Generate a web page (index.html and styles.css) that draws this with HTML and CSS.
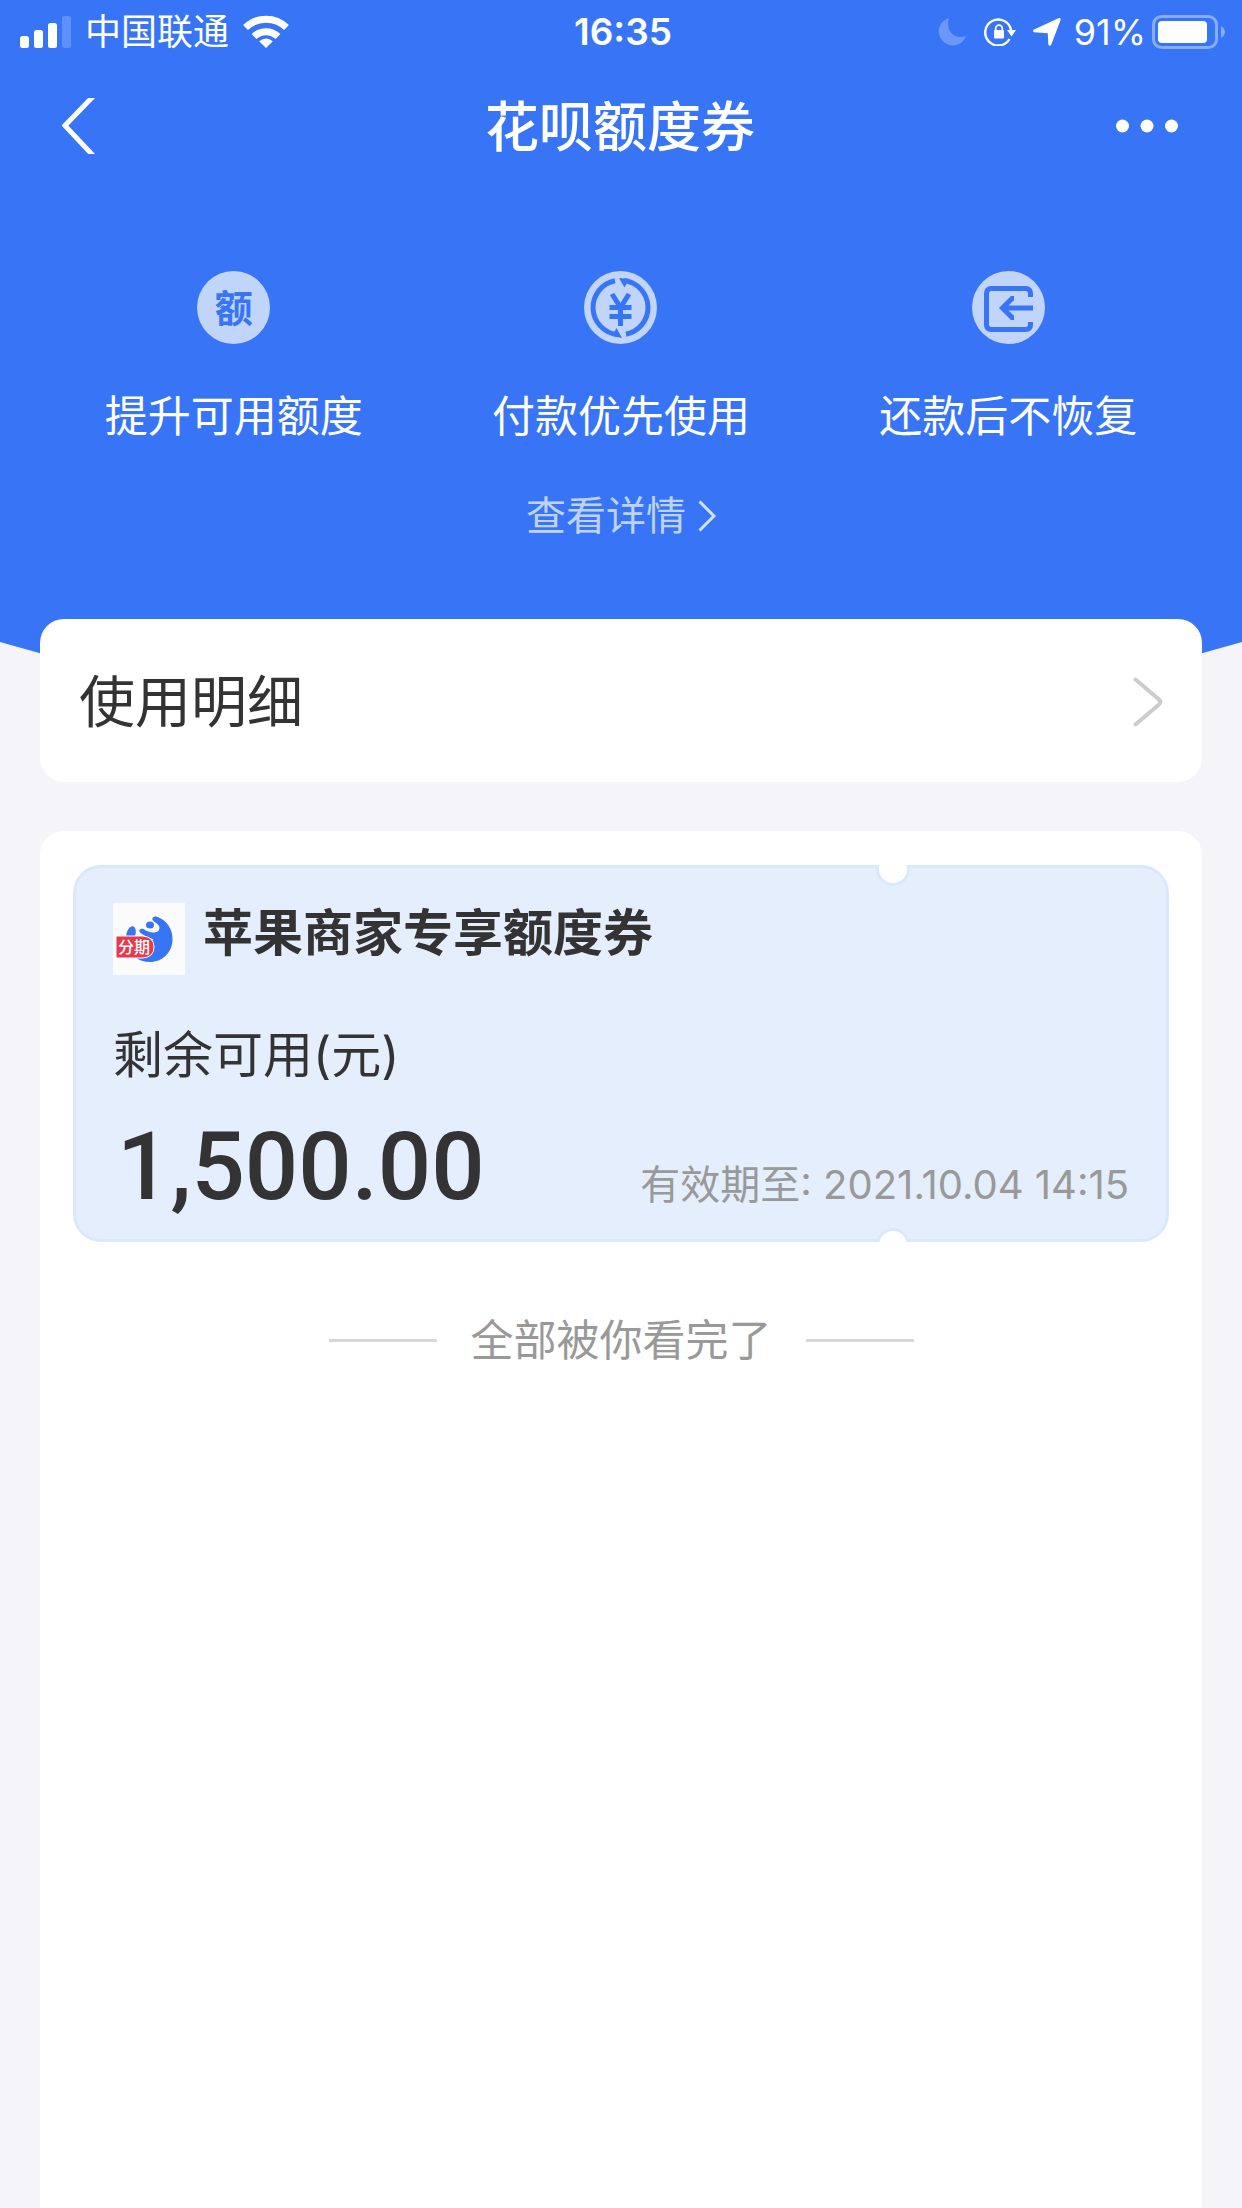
FILE: index.html
```html
<!DOCTYPE html>
<html lang="zh-CN">
<head>
<meta charset="utf-8">
<meta name="viewport" content="width=device-width, initial-scale=1">
<title>花呗额度券</title>
<link rel="stylesheet" href="styles.css">
</head>
<body>
<header class="hero">
  <div class="status">
    <div class="status-side">
      <svg class="signal" width="51" height="32" viewBox="0 0 51 32" fill="#fff" aria-hidden="true">
        <rect x="0" y="20" width="9" height="12" rx="2.5"/><rect x="14" y="14" width="9" height="18" rx="2.5"/><rect x="28" y="7" width="9" height="25" rx="2.5"/><rect x="42" y="0" width="9" height="32" rx="2.5" opacity=".2"/>
      </svg>
      <span class="carrier">中国联通</span>
      <svg class="wifi" width="46" height="34" viewBox="0 0 46 34" aria-hidden="true">
        <g fill="none" stroke="#fff" stroke-width="7"><path d="M2.500 12.500a29.500 29.500 0 0 1 41 0"/><path d="M11 21.500a17.500 17.500 0 0 1 24 0"/></g>
        <path fill="#fff" d="M16.200 26.200q6.800-5.400 13.600 0L23 33z"/>
      </svg>
    </div>
    <span class="time">16:35</span>
    <div class="status-side status-right">
      <svg class="moon" width="28" height="28" viewBox="0 0 28 28" aria-hidden="true"><path fill="#fff" opacity=".26" d="M11 0A14 14 0 1 0 28 18C17 22 7 14 11 0z"/></svg>
      <svg class="lock" width="32" height="28" viewBox="0 0 32 28" aria-hidden="true">
        <path d="M25.500 21A13 13 0 1 1 27 12" fill="none" stroke="#fff" stroke-width="2.400"/>
        <path d="M23 12h9l-4.500 6.500z" fill="#fff"/><rect x="10" y="12" width="10" height="8.500" rx="1" fill="#fff"/><path d="M11.700 12V10.500a3.300 3.300 0 0 1 6.600 0V12" fill="none" stroke="#fff" stroke-width="1.700"/>
      </svg>
      <svg class="locate" width="28" height="28" viewBox="0 0 28 28" aria-hidden="true"><path fill="#fff" d="M25.500.3q2.600-.8 2 1.900L18.300 26.500q-1.400 2.500-3 0l-.5-11.300L1 14.200q-2-1 0-2.700z"/></svg>
      <span class="percent">91%</span>
      <svg class="battery" width="74" height="34" viewBox="0 0 74 34" aria-hidden="true">
        <rect x="1.500" y="1.500" width="63" height="31" rx="8" fill="none" stroke="#fff" stroke-opacity=".4" stroke-width="3"/><rect x="6" y="6" width="49" height="22" rx="4" fill="#fff"/><path d="M69 11q8 6 0 12z" fill="#fff" opacity=".4"/>
      </svg>
    </div>
  </div>
  <nav class="nav">
    <button class="icon-button back" type="button" aria-label="返回">
      <svg width="34" height="56" viewBox="0 0 34 56"><path d="M31.500-2L3 27.600 31.500 58" fill="none" stroke="#fff" stroke-width="5"/></svg>
    </button>
    <h1 class="title">花呗额度券</h1>
    <button class="icon-button more" type="button" aria-label="更多">
      <svg width="62" height="14" viewBox="0 0 62 14" fill="#fff"><circle cx="6.500" cy="7" r="6.500"/><circle cx="31" cy="7" r="6.500"/><circle cx="55.500" cy="7" r="6.500"/></svg>
    </button>
  </nav>
  <ul class="features">
    <li class="feature"><span class="badge">额</span><span>提升可用额度</span></li>
    <li class="feature">
      <svg width="73" height="73" viewBox="0 0 73 73" aria-hidden="true">
        <circle cx="36.500" cy="36.500" r="36.500" fill="#c1d5fb"/>
        <g fill="none" stroke="#3875f6" stroke-width="5"><path d="M31 9.800A27.200 27.200 0 0 0 33 63.500"/><path d="M42 63.200A27.200 27.200 0 0 0 40 9.500"/></g>
        <path fill="#3875f6" d="M35 7l10 1-4.500 8.500zM38 67l-10-2 4.500-8z"/>
        <path d="M28 23l8.500 13.500L45 23M36.500 35v20M25.500 36.500h22M25.500 45.500h22" fill="none" stroke="#3875f6" stroke-width="5"/>
      </svg>
      <span>付款优先使用</span>
    </li>
    <li class="feature">
      <svg width="73" height="73" viewBox="0 0 73 73" aria-hidden="true">
        <circle cx="36.500" cy="36.500" r="36.500" fill="#c1d5fb"/>
        <path d="M58.500 26v-3.500q0-5-5-5h-34q-5 0-5 5v31q0 5 5 5h34q5 0 5-5V51M61 37H30M42 27.500h-2L30.500 37l9.500 9.500h2" fill="none" stroke="#3875f6" stroke-width="5"/>
      </svg>
      <span>还款后不恢复</span>
    </li>
  </ul>
  <a class="details" href="#details">查看详情
    <svg width="18" height="32" viewBox="0 0 18 32" aria-hidden="true"><path d="M1.500 1.500L16 16 1.500 30.500" fill="none" stroke="#d4e1fc" stroke-width="3"/></svg>
  </a>
</header>
<main class="content">
  <a class="usage" href="#usage">使用明细
    <svg width="30" height="50" viewBox="0 0 30 50" aria-hidden="true"><path d="M2.500 2.500L26 22.500q2.500 2.500 0 5L2.500 47.500" fill="none" stroke="#ccc" stroke-width="4" stroke-linecap="round"/></svg>
  </a>
  <section class="panel">
    <article class="coupon">
      <div class="coupon-head">
        <svg class="logo" width="72" height="72" viewBox="0 0 72 72" aria-hidden="true">
          <rect width="72" height="72" fill="#fbfbfc"/>
          <g fill="#3875f6">
            <path d="M43 13.500C54 17 60 26 59.500 37 59 50 49 59 37 59 31 59 26 57.500 22 54L34 50 40 36C36 35.500 31 32.500 27 29.500 25 27 28 25 30.500 26 36 30 43 31 46 27 48 23 44 20.500 40.500 18 38 16 40 13 43 13.500z"/>
            <ellipse cx="37" cy="22" rx="4" ry="3.500"/><ellipse cx="18" cy="31" rx="4.500" ry="8" transform="rotate(15 18 31)"/>
          </g>
          <path fill="#e8394a" stroke="#fff" d="M4 33h26q11 1 11 11T30 55H4q-1 0-1-1V34q0-1 1-1z"/>
          <text x="5" y="50" class="logo-text">分期</text>
        </svg>
        <h2 class="coupon-title">苹果商家专享额度券</h2>
      </div>
      <p class="label">剩余可用(元)</p>
      <div class="coupon-foot">
        <strong class="amount">1,500.00</strong>
        <span class="expiry">有效期至: 2021.10.04 14:15</span>
      </div>
    </article>
    <p class="end">全部被你看完了</p>
  </section>
</main>
</body>
</html>
```
FILE: styles.css
```css
* { box-sizing: border-box; }

body {
  margin: 0;
  min-height: 100vh;
  display: flex;
  flex-direction: column;
  background: #f4f4f9;
  color: #333;
  font-family: Inter, "Noto Sans CJK SC", sans-serif;
}

h1, h2, p, ul { margin: 0; padding: 0; }
a { color: inherit; text-decoration: none; }
svg { display: block; flex: none; }

.hero {
  display: flex;
  flex-direction: column;
  padding-bottom: 125px;
  background: #3875f6;
  color: #fff;
  clip-path: polygon(0 0, 100% 0, 100% calc(100% - 28px), calc(100% - 100px) 100%, 100px 100%, 0 calc(100% - 28px));
}

.status {
  display: grid;
  grid-template-columns: 1fr auto 1fr;
  align-items: center;
  height: 64px;
  padding: 0 16px 0 20px;
  font-size: 36px;
  line-height: 48px;
}
.status-side { display: flex; align-items: center; }
.status-right { justify-content: flex-end; }
.carrier { margin: 0 14px; }
.time { font-size: 37px; font-weight: 600; }
.moon { margin-right: 18px; }
.lock { margin-right: 17px; }
.locate { margin-right: 13px; }
.percent { margin-right: 6px; }

.nav {
  display: grid;
  grid-template-columns: 1fr auto 1fr;
  align-items: center;
  height: 124px;
  padding: 0 64px 0 62px;
}
.icon-button {
  padding: 0;
  border: 0;
  background: none;
  cursor: pointer;
}
.more { justify-self: end; }
.back { justify-self: start; }
.title { padding-top: 4px; font-size: 54px; font-weight: 500; line-height: 80px; }

.features {
  display: grid;
  grid-template-columns: repeat(3, 1fr);
  padding: 83px 40px 0;
  list-style: none;
}
.feature {
  display: flex;
  flex-direction: column;
  align-items: center;
  gap: 42px;
  font-size: 43px;
  line-height: 60px;
}
.badge {
  width: 73px;
  height: 73px;
  border-radius: 50%;
  background: #c1d5fb;
  color: #3875f6;
  font-size: 38px;
  font-weight: 700;
  line-height: 74px;
  text-align: center;
}
.details {
  display: flex;
  align-items: center;
  align-self: center;
  gap: 12px;
  margin-top: 42px;
  margin-bottom: 1px;
  color: #bed2fc;
  font-size: 40px;
  line-height: 56px;
}

.content {
  position: relative;
  flex: 1;
  display: flex;
  flex-direction: column;
  gap: 49px;
  margin-top: -51px;
  padding: 0 40px;
}
.usage {
  display: flex;
  align-items: center;
  justify-content: space-between;
  padding: 43px 39px 40px;
  border-radius: 24px;
  background: #fff;
  font-size: 56px;
  line-height: 80px;
}
.panel {
  flex: 1;
  padding: 34px 33px;
  border-radius: 24px 24px 0 0;
  background: #fff;
}
.coupon {
  position: relative;
  padding: 35px 37px 16px;
  border: 3px solid #dbe8fc;
  border-radius: 28px;
  background: #e4eefd;
}
/* Ticket notches: circles clipped to the part inside the coupon edge. */
.coupon::before,
.coupon::after {
  content: "";
  position: absolute;
  left: calc(75% - 18px);
  width: 28px;
  height: 28px;
  border: 3px solid #dbe8fc;
  border-radius: 50%;
  background: #fff;
}
.coupon::before {
  top: -16px;
  clip-path: inset(13px 0 0 0);
}
.coupon::after {
  bottom: -23px;
  clip-path: inset(0 0 20px 0);
}
.coupon-head { display: flex; gap: 18px; }
.logo-text { fill: #fff; font-size: 16px; font-weight: 500; }
.coupon-title { font-size: 50px; font-weight: 700; line-height: 60px; }
.label { margin-top: 44px; font-size: 50px; line-height: 72px; }
.coupon-foot {
  display: flex;
  align-items: baseline;
  justify-content: space-between;
  margin-top: 20px;
}
.amount { padding-left: 4px; font: 500 94px/112px Roboto, sans-serif; }
.expiry { color: #999; font-size: 40px; line-height: 56px; }
.end {
  display: flex;
  align-items: center;
  justify-content: center;
  gap: 34px;
  margin-top: 68px;
  color: #999;
  font-size: 43px;
  line-height: 60px;
}
.end::before,
.end::after {
  content: "";
  width: 108px;
  height: 3px;
  background: #d8d8d8;
}
```
